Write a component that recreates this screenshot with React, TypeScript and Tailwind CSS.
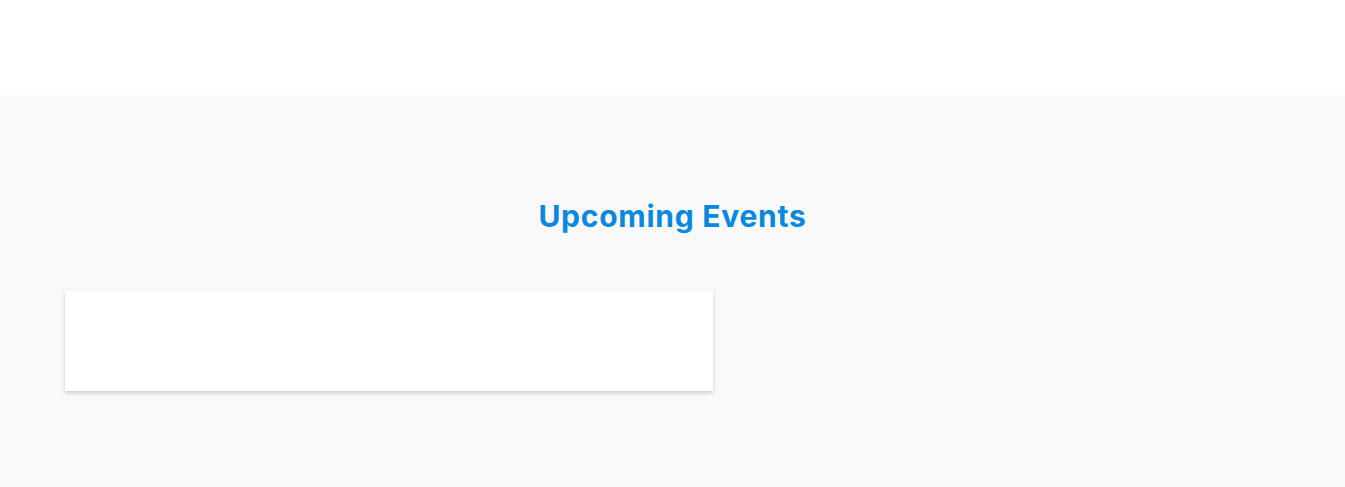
import React from "react";

const App = () => {
  return (
    <div className="min-h-[487px] bg-white" style={{ fontFamily: "Inter, 'Noto Sans', sans-serif" }}>
      <header className="h-[95px] bg-white" />
      <section className="bg-[#f9f9f9] min-h-[392px] px-[65px] pt-[98px] pb-[96px]">
        <h2 className="text-center text-[30px] leading-[46px] font-bold text-[#0888e0] tracking-[0.75px]">
          Upcoming Events
        </h2>
        <div className="mt-[52px] grid grid-cols-2">
          <div className="w-[648px] h-[100px] bg-white shadow-[0_2px_4px_rgba(0,0,0,0.18)]" />
        </div>
      </section>
    </div>
  );
};

export default App;
